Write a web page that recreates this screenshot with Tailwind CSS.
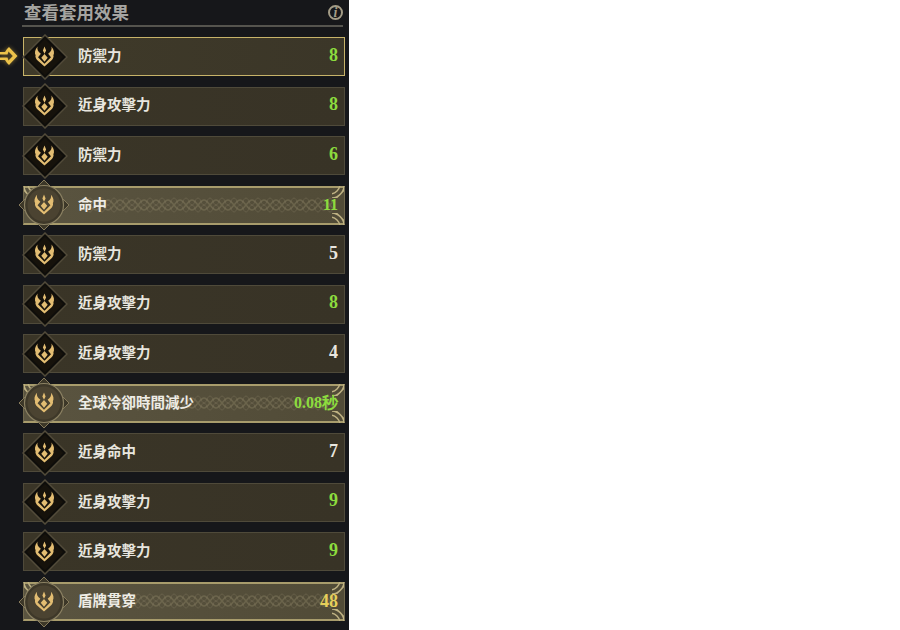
<!DOCTYPE html>
<html lang="zh-Hant">
  <head>
    <meta charset="UTF-8" />
    <title>查看套用效果</title>
    <script src="https://cdn.jsdelivr.net/npm/@tailwindcss/browser@4"></script>
  </head>
  <body class="bg-white m-0 p-0 font-['Noto_Sans_CJK_TC','Noto_Sans',sans-serif]">
    <svg width="0" height="0" class="absolute">
      <defs>
        <symbol id="crest" viewBox="-1 0 26 27">
          <path fill="#e3bd72" d="M12 1 14 6 12 10 10 6Z M12 10.500 16 15 12 20 8 15Z M3.500 1C2.500 4 3.500 7.500 7.500 10L4 14.500 12 22.500 20 14.500 16.500 10C20.500 7.500 21.500 4 20.500 1 24 5 24.500 9 23 12 24 14 22 17 20.500 18.500L12 26 3.500 18.500C2 17 0 14 1 12-.5 9 0 5 3.500 1Z" />
        </symbol>
        <symbol id="plain-badge" viewBox="0 0 46 46">
          <path d="M23 1 45 23 23 45 1 23Z" fill="#0e0d0a" stroke="#524b3a" stroke-width="1.500" />
          <path d="M23 5 41 23 23 41 5 23Z" fill="#16120b" />
        </symbol>
        <symbol id="round-badge" viewBox="0 0 56 56">
          <path d="M28 3 53 28 28 53 3 28Z" fill="#3c3728" stroke="#85795a" stroke-width="1" />
          <circle cx="28" cy="28" r="19.500" fill="#3e3829" stroke="#8a8062" stroke-width="1.200" />
          <circle cx="28" cy="28" r="16.500" fill="#4b4331" />
        </symbol>
        <pattern id="knot" width="12" height="16" patternUnits="userSpaceOnUse">
          <path d="M0 3C4 3 8 13 12 13M0 13C4 13 8 3 12 3" fill="none" stroke="#9b9272" stroke-opacity=".32" stroke-width="1.500" />
          <path d="M0 8C3 8 3 1 6 1S9 8 12 8M0 8C3 8 3 15 6 15S9 8 12 8" fill="none" stroke="#9b9272" stroke-opacity=".22" stroke-width="1" />
        </pattern>
        <symbol id="corner" viewBox="0 0 10 10">
          <path d="M0 0C0 5 5 10 10 10M0 3.500C2 6 4 8 6.500 10M3.500 0C4 3 7 6 10 6.500" fill="none" stroke="#c0b384" stroke-width="1.200" />
        </symbol>
      </defs>
    </svg>

    <div class="w-[349px] h-[630px] bg-[#16171a] overflow-hidden relative">
      <header class="h-[27px] ml-[22px] mr-[6px] border-b-2 border-[#55544e] flex items-start justify-between">
        <h1 class="m-0 mt-[1px] pl-[2px] text-[17.5px] leading-[22px] font-bold text-[#a5a5a1]">查看套用效果</h1>
        <span class="w-[15px] h-[15px] mt-[5px] rounded-full border-2 border-[#a39c86] flex items-center justify-center font-['Liberation_Serif',serif] italic font-bold text-[14px] leading-none text-[#a39c86]">i</span>
      </header>

      <!-- selected row pointer -->
      <svg class="absolute left-0 top-[46px] drop-shadow-[0_0_2px_#e8bd4580]" width="18" height="20" viewBox="0 0 18 20">
        <path d="M0 6H5L7 3 9 1 17.500 10 9 19 7 17 5 14H0V11.500H7.500L8.500 14.500 12.800 10 8.500 5.500 7.500 8.500H0Z" fill="#ecc24a" />
      </svg>

      <main class="ml-[23px] mr-[4px] mt-[10px] flex flex-col gap-[10.55px]">
        <div class="h-[39px] flex items-center border border-[#c7b369] bg-gradient-to-r from-[#3f3a29] to-[#3b3628]">
          <svg class="w-[46px] h-[46px] shrink-0 -my-[4px] -ml-[2px]" viewBox="0 0 46 46"><use href="#plain-badge" /><use href="#crest" x="12" y="11" width="21" height="23" /></svg>
          <span class="ml-[10px] mb-[4px] text-[14.5px] font-bold text-[#e8e6df]">防禦力</span>
          <span class="ml-auto mr-[6px] mb-[3px] font-['Liberation_Serif',serif] font-bold text-[18px] text-[#8cdc3e]">8</span>
        </div>
        <div class="h-[39px] flex items-center border border-[#4f4a3a] bg-gradient-to-r from-[#3a3527] to-[#383326]">
          <svg class="w-[46px] h-[46px] shrink-0 -my-[4px] -ml-[2px]" viewBox="0 0 46 46"><use href="#plain-badge" /><use href="#crest" x="12" y="11" width="21" height="23" /></svg>
          <span class="ml-[10px] mb-[4px] text-[14.5px] font-bold text-[#e8e6df]">近身攻擊力</span>
          <span class="ml-auto mr-[6px] mb-[3px] font-['Liberation_Serif',serif] font-bold text-[18px] text-[#8cdc3e]">8</span>
        </div>
        <div class="h-[39px] flex items-center border border-[#4f4a3a] bg-gradient-to-r from-[#3a3527] to-[#383326]">
          <svg class="w-[46px] h-[46px] shrink-0 -my-[4px] -ml-[2px]" viewBox="0 0 46 46"><use href="#plain-badge" /><use href="#crest" x="12" y="11" width="21" height="23" /></svg>
          <span class="ml-[10px] mb-[4px] text-[14.5px] font-bold text-[#e8e6df]">防禦力</span>
          <span class="ml-auto mr-[6px] mb-[3px] font-['Liberation_Serif',serif] font-bold text-[18px] text-[#8cdc3e]">6</span>
        </div>
        <div class="relative h-[39px] flex items-center border-y-2 border-x border-y-[#a89c6c] border-x-[#6f674c] bg-gradient-to-r from-[#5a5440] to-[#514b37]">
          <svg class="absolute inset-x-0 top-[9px] w-full h-[16px]"><rect x="60" width="250" height="100%" fill="url(#knot)" /></svg>
          <svg class="absolute left-0 -top-[2px]" width="12" height="12"><use href="#corner" /></svg>
          <svg class="absolute right-0 -top-[2px] -scale-x-100" width="12" height="12"><use href="#corner" /></svg>
          <svg class="absolute right-0 -bottom-[2px] -scale-100" width="12" height="12"><use href="#corner" /></svg>
          <svg class="relative w-[56px] h-[56px] shrink-0 -my-[10px] -ml-[8px]" viewBox="0 0 56 56"><use href="#round-badge" /><use href="#crest" x="17.500" y="16" width="21" height="23" /></svg>
          <span class="relative ml-[6px] mb-[3px] text-[14.5px] font-bold text-[#eeece5]">命中</span>
          <span class="relative ml-auto mr-[6px] font-['Liberation_Serif',serif] font-bold text-[16px] text-[#8cdc3e]">11</span>
        </div>
        <div class="h-[39px] flex items-center border border-[#4f4a3a] bg-gradient-to-r from-[#3a3527] to-[#383326]">
          <svg class="w-[46px] h-[46px] shrink-0 -my-[4px] -ml-[2px]" viewBox="0 0 46 46"><use href="#plain-badge" /><use href="#crest" x="12" y="11" width="21" height="23" /></svg>
          <span class="ml-[10px] mb-[4px] text-[14.5px] font-bold text-[#e8e6df]">防禦力</span>
          <span class="ml-auto mr-[6px] mb-[3px] font-['Liberation_Serif',serif] font-bold text-[18px] text-[#e8e6df]">5</span>
        </div>
        <div class="h-[39px] flex items-center border border-[#4f4a3a] bg-gradient-to-r from-[#3a3527] to-[#383326]">
          <svg class="w-[46px] h-[46px] shrink-0 -my-[4px] -ml-[2px]" viewBox="0 0 46 46"><use href="#plain-badge" /><use href="#crest" x="12" y="11" width="21" height="23" /></svg>
          <span class="ml-[10px] mb-[4px] text-[14.5px] font-bold text-[#e8e6df]">近身攻擊力</span>
          <span class="ml-auto mr-[6px] mb-[3px] font-['Liberation_Serif',serif] font-bold text-[18px] text-[#8cdc3e]">8</span>
        </div>
        <div class="h-[39px] flex items-center border border-[#4f4a3a] bg-gradient-to-r from-[#3a3527] to-[#383326]">
          <svg class="w-[46px] h-[46px] shrink-0 -my-[4px] -ml-[2px]" viewBox="0 0 46 46"><use href="#plain-badge" /><use href="#crest" x="12" y="11" width="21" height="23" /></svg>
          <span class="ml-[10px] mb-[4px] text-[14.5px] font-bold text-[#e8e6df]">近身攻擊力</span>
          <span class="ml-auto mr-[6px] mb-[3px] font-['Liberation_Serif',serif] font-bold text-[18px] text-[#e8e6df]">4</span>
        </div>
        <div class="relative h-[39px] flex items-center border-y-2 border-x border-y-[#a89c6c] border-x-[#6f674c] bg-gradient-to-r from-[#5a5440] to-[#514b37]">
          <svg class="absolute inset-x-0 top-[9px] w-full h-[16px]"><rect x="60" width="250" height="100%" fill="url(#knot)" /></svg>
          <svg class="absolute left-0 -top-[2px]" width="12" height="12"><use href="#corner" /></svg>
          <svg class="absolute right-0 -top-[2px] -scale-x-100" width="12" height="12"><use href="#corner" /></svg>
          <svg class="absolute right-0 -bottom-[2px] -scale-100" width="12" height="12"><use href="#corner" /></svg>
          <svg class="relative w-[56px] h-[56px] shrink-0 -my-[10px] -ml-[8px]" viewBox="0 0 56 56"><use href="#round-badge" /><use href="#crest" x="17.500" y="16" width="21" height="23" /></svg>
          <span class="relative ml-[6px] mb-[3px] text-[14.5px] font-bold text-[#eeece5]">全球冷卻時間減少</span>
          <span class="relative ml-auto mr-[6px] mb-[1px] font-['Liberation_Serif',serif] font-bold text-[16px] text-[#8cdc3e]">0.08秒</span>
        </div>
        <div class="h-[39px] flex items-center border border-[#4f4a3a] bg-gradient-to-r from-[#3a3527] to-[#383326]">
          <svg class="w-[46px] h-[46px] shrink-0 -my-[4px] -ml-[2px]" viewBox="0 0 46 46"><use href="#plain-badge" /><use href="#crest" x="12" y="11" width="21" height="23" /></svg>
          <span class="ml-[10px] mb-[4px] text-[14.5px] font-bold text-[#e8e6df]">近身命中</span>
          <span class="ml-auto mr-[6px] mb-[3px] font-['Liberation_Serif',serif] font-bold text-[18px] text-[#e8e6df]">7</span>
        </div>
        <div class="h-[39px] flex items-center border border-[#4f4a3a] bg-gradient-to-r from-[#3a3527] to-[#383326]">
          <svg class="w-[46px] h-[46px] shrink-0 -my-[4px] -ml-[2px]" viewBox="0 0 46 46"><use href="#plain-badge" /><use href="#crest" x="12" y="11" width="21" height="23" /></svg>
          <span class="ml-[10px] mb-[4px] text-[14.5px] font-bold text-[#e8e6df]">近身攻擊力</span>
          <span class="ml-auto mr-[6px] mb-[3px] font-['Liberation_Serif',serif] font-bold text-[18px] text-[#8cdc3e]">9</span>
        </div>
        <div class="h-[39px] flex items-center border border-[#4f4a3a] bg-gradient-to-r from-[#3a3527] to-[#383326]">
          <svg class="w-[46px] h-[46px] shrink-0 -my-[4px] -ml-[2px]" viewBox="0 0 46 46"><use href="#plain-badge" /><use href="#crest" x="12" y="11" width="21" height="23" /></svg>
          <span class="ml-[10px] mb-[4px] text-[14.5px] font-bold text-[#e8e6df]">近身攻擊力</span>
          <span class="ml-auto mr-[6px] mb-[3px] font-['Liberation_Serif',serif] font-bold text-[18px] text-[#8cdc3e]">9</span>
        </div>
        <div class="relative h-[39px] flex items-center border-y-2 border-x border-y-[#a89c6c] border-x-[#6f674c] bg-gradient-to-r from-[#5a5440] to-[#514b37]">
          <svg class="absolute inset-x-0 top-[9px] w-full h-[16px]"><rect x="60" width="250" height="100%" fill="url(#knot)" /></svg>
          <svg class="absolute left-0 -top-[2px]" width="12" height="12"><use href="#corner" /></svg>
          <svg class="absolute right-0 -top-[2px] -scale-x-100" width="12" height="12"><use href="#corner" /></svg>
          <svg class="absolute right-0 -bottom-[2px] -scale-100" width="12" height="12"><use href="#corner" /></svg>
          <svg class="relative w-[56px] h-[56px] shrink-0 -my-[10px] -ml-[8px]" viewBox="0 0 56 56"><use href="#round-badge" /><use href="#crest" x="17.500" y="16" width="21" height="23" /></svg>
          <span class="relative ml-[6px] mb-[3px] text-[14.5px] font-bold text-[#eeece5]">盾牌貫穿</span>
          <span class="relative ml-auto mr-[6px] font-['Liberation_Serif',serif] font-bold text-[18px] text-[#e6cf5a]">48</span>
        </div>
      </main>
    </div>
  </body>
</html>
